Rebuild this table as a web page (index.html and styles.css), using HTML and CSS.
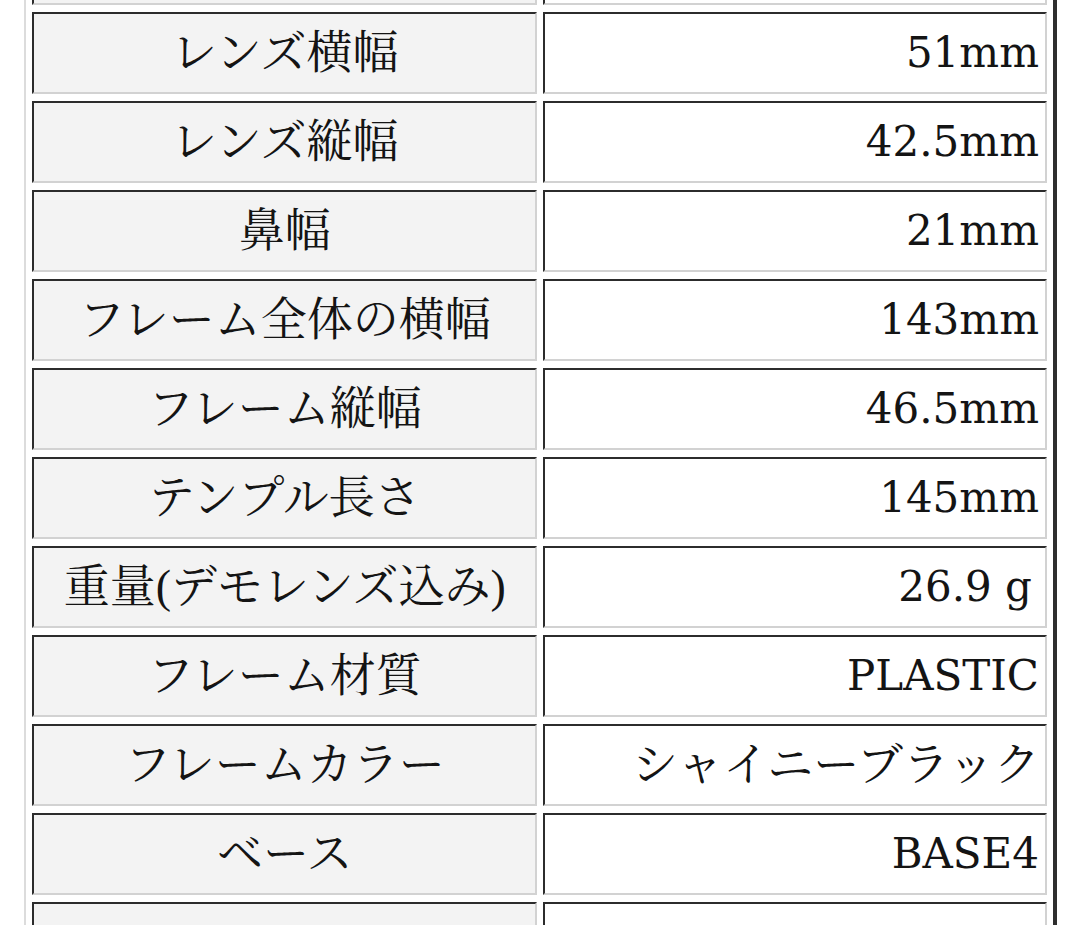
FILE: index.html
```html
<!DOCTYPE html>
<html lang="ja">
<head>
<meta charset="utf-8">
<title>スペック</title>
<link rel="stylesheet" href="styles.css">
</head>
<body>
<div class="page">
  <table class="spec">
    <tbody>
      <tr><th class="label">&nbsp;</th><td class="value">&nbsp;</td></tr>
      <tr><th class="label">レンズ横幅</th><td class="value num">51mm</td></tr>
      <tr><th class="label">レンズ縦幅</th><td class="value num">42.5mm</td></tr>
      <tr><th class="label">鼻幅</th><td class="value num">21mm</td></tr>
      <tr><th class="label">フレーム全体の横幅</th><td class="value num">143mm</td></tr>
      <tr><th class="label">フレーム縦幅</th><td class="value num">46.5mm</td></tr>
      <tr><th class="label">テンプル長さ</th><td class="value num">145mm</td></tr>
      <tr><th class="label">重量(デモレンズ込み)</th><td class="value num weight">26.9 g</td></tr>
      <tr><th class="label">フレーム材質</th><td class="value num">PLASTIC</td></tr>
      <tr><th class="label">フレームカラー</th><td class="value">シャイニーブラック</td></tr>
      <tr><th class="label">ベース</th><td class="value num">BASE4</td></tr>
      <tr><th class="label">&nbsp;</th><td class="value">&nbsp;</td></tr>
    </tbody>
  </table>
</div>
</body>
</html>
```
FILE: styles.css
```css
html, body {
  margin: 0;
  padding: 0;
  background: #ffffff;
}

.page {
  width: 1080px;
  height: 925px;
  overflow: hidden;
  padding-left: 24px;
  box-sizing: border-box;
}

.spec {
  width: 1033px;
  margin-top: -86px;
  border-collapse: separate;
  border-spacing: 6px 7px;
  border-style: solid;
  border-width: 2px 4px 2px 2px;
  border-color: #dcdcdc #2e2e2e #2e2e2e #dcdcdc;
  table-layout: fixed;
  font-family: "Liberation Serif", "Noto Serif CJK JP", "Noto Sans CJK JP", serif;
  font-size: 46px;
  color: #141414;
}

.spec th,
.spec td {
  box-sizing: border-box;
  height: 82px;
  padding: 0 5px 0 6px;
  border-style: solid;
  border-width: 2px;
  border-color: #2c2c2c #d2d2d2 #d2d2d2 #2c2c2c;
  vertical-align: middle;
  white-space: nowrap;
  line-height: 1.2;
}

.label {
  background: #f3f3f3;
  font-weight: 400;
  text-align: center;
}

.value {
  background: #ffffff;
  text-align: right;
  padding-right: 10px;
}

.value.num {
  font-family: "DejaVu Serif", "Liberation Serif", serif;
  font-size: 42px;
  padding-right: 6px;
}

.value.weight {
  padding-right: 13px;
}
```
